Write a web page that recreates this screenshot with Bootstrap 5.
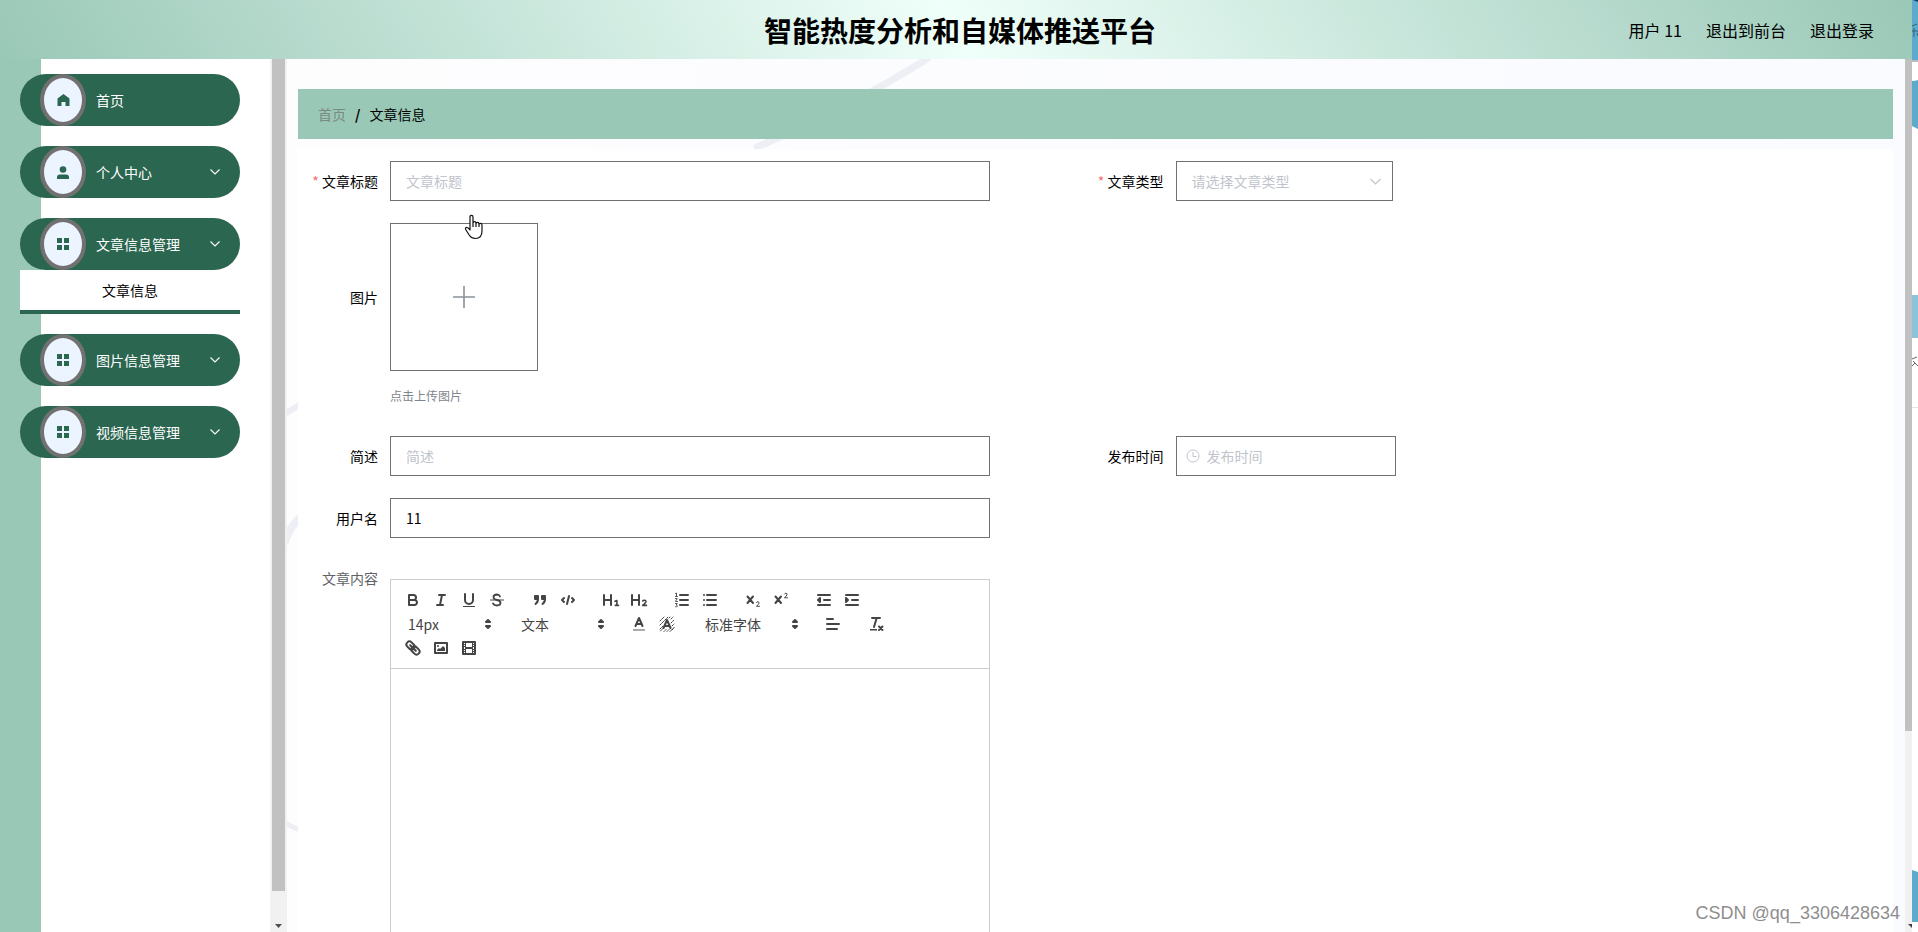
<!DOCTYPE html>
<html lang="zh-CN">
<head>
<meta charset="utf-8">
<meta name="viewport" content="width=device-width, initial-scale=1">
<title>智能热度分析和自媒体推送平台</title>
<link rel="stylesheet" href="https://cdn.jsdelivr.net/npm/bootstrap@5.3.0/dist/css/bootstrap.min.css">
<style>
  :root { --mint: #9ac8b7; --forest: #2b6650; --edge: #717171; --hint: #c0c4cc; }
  body { font-family: "Noto Sans CJK SC", sans-serif; font-size: 14px; line-height: 20px; color: #000; background: #fff; }
  a { color: inherit; text-decoration: none; }

  .topbar { display: grid; grid-template-columns: 1fr auto 1fr; height: 59px; padding: 0 38px 0 46px;
    background: linear-gradient(60deg, var(--mint), #effff9 50%, var(--mint)); }
  .topbar h1 { grid-column: 2; font-size: 28px; line-height: 40px; font-weight: 700; }
  .topbar nav { font-size: 16px; gap: 24px; }

  .side { width: 270px; padding: 15px 30px 0 20px; background: linear-gradient(90deg, var(--mint) 41px, #fff 41px); }
  .side-entry { margin-bottom: 20px; }
  .side-link { height: 52px; padding: 0 20px; border: 0; border-radius: 26px; background: var(--forest); color: #fff; }
  .side-ico { width: 46px; height: 52px; border: 4px solid #717171; border-radius: 50%; background: #ecf5ff; margin-right: 10px; }
  .side-sub { height: 44px; border-bottom: 4px solid var(--forest); background: #fff; }

  .track { background: #f1f1f1; }
  .track-side { width: 17px; padding: 0 2px; }
  .track-main { width: 7px; }
  .thumb { background: #c1c1c1; }
  .track-side .thumb { height: calc(100% - 41px); }
  .track-main .thumb { height: 77%; }

  .stage { background: linear-gradient(90deg, #fdfdfe, #fafbff); padding: 30px 12px 0 11px; }
  .crumbs { height: 50px; padding: 0 20px; margin-bottom: 10px; background: var(--mint); gap: 9px; }
  .crumbs a { color: #7c8a84; }
  .sheet { background: #fff; padding: 12px 12px 0 12px; height: 100%; }

  .field { margin-bottom: 22px; }
  .field-name { width: 80px; padding-right: 12px; text-align: right; white-space: nowrap; }
  .field-name.must::before { content: "* "; color: #f56c6c; }
  .box { height: 40px; border: 1px solid var(--edge); border-radius: 0; padding: 0 15px; font-size: 14px; color: #000; background: #fff; }
  .box::placeholder { color: var(--hint); }
  select.box { color: var(--hint); background: none; }
  .w-long { width: 600px; }
  .w-kind { width: 217px; }
  .w-date { width: 220px; }
  .w-date .box { padding-left: 30px; }
  .over-right { right: 12px; top: 13px; color: var(--hint); }
  .over-left { left: 10px; top: 13px; }
  .tall-name { line-height: 148px; }
  .editor-name { line-height: 36px; color: #606266; }
  .drop { width: 148px; height: 148px; border: 1px solid var(--edge); background: #fff; }
  .tip { font-size: 12px; line-height: 20px; margin: 15px 0 8px; color: #7e858e; }
  .hand { left: 74px; top: -9px; }

  .editor { margin-top: 19px; border: 1px solid #ccc; height: 700px; }
  .tools { padding: 8px 0 8px 8px; border-bottom: 1px solid #ccc; }
  .tools .grp { margin-right: 15px; height: 24px; }
  .tools button { width: 28px; height: 24px; padding: 3px 5px; border: 0; background: none; display: block; }
  .tools svg { width: 18px; height: 18px; display: block; }
  .tools select { width: 98px; height: 24px; border: 0; appearance: none; background: none; color: #444; padding: 0 9px; font-size: 14px; line-height: 24px; }
  .tools select.wide { width: 108px; }
  .tools .updown { right: 0; top: 3px; pointer-events: none; }
  .s { fill: none; stroke: #444; stroke-width: 2; stroke-linecap: round; stroke-linejoin: round; }
  .t { stroke-width: 1; }
  .f { fill: #444; }
  .sf { fill: #444; }

  .neighbour { width: 6px; }
  .mark-note { right: 12px; bottom: 6px; font: 18px/26px "Liberation Sans", sans-serif; color: #8e8e8e; }
</style>
</head>
<body class="vh-100 overflow-hidden d-flex">

<svg class="d-none">
  <symbol id="grid4" viewBox="0 0 12 12"><path fill="#2b6650" d="M0 0h5v5H0zM7 0h5v5H7zM0 7h5v5H0zM7 7h5v5H7z"/></symbol>
  <symbol id="down" viewBox="0 0 10 6"><path fill="none" stroke="currentColor" stroke-width="1.1" d="M.5 .5L5 5L9.500 .5"/></symbol>
  <symbol id="pick" viewBox="0 0 18 18"><path class="s sf" d="M7 11L9 13L11 11ZM7 7L9 5L11 7Z"/></symbol>
</svg>

<div class="flex-grow-1 d-flex flex-column position-relative overflow-hidden">
  <header class="topbar align-items-center flex-shrink-0">
    <h1 class="m-0">智能热度分析和自媒体推送平台</h1>
    <nav class="d-flex justify-content-end"><span>用户 11</span><a href="#">退出到前台</a><a href="#">退出登录</a></nav>
  </header>

  <div class="d-flex flex-grow-1 overflow-hidden">
    <aside class="side flex-shrink-0">
      <div class="side-entry">
        <button class="side-link w-100 d-flex align-items-center"><span class="side-ico d-flex align-items-center justify-content-center">
          <svg width="13" height="12" viewBox="0 0 13 12"><path fill="#2b6650" d="M6.500 0L12.500 4.500V12H8.500V8H4.500V12H.5V4.500Z"/></svg></span>首页</button>
      </div>
      <div class="side-entry">
        <button class="side-link w-100 d-flex align-items-center"><span class="side-ico d-flex align-items-center justify-content-center">
          <svg width="12" height="13" viewBox="0 0 12 13"><circle cx="6" cy="3.500" r="3.300" fill="#2b6650"/><path fill="#2b6650" d="M0 13V11Q0 8.500 3 8.500H9Q12 8.500 12 11V13Z"/></svg></span>个人中心<svg class="ms-auto" width="10" height="6"><use href="#down"/></svg></button>
      </div>
      <div class="side-entry">
        <button class="side-link w-100 d-flex align-items-center"><span class="side-ico d-flex align-items-center justify-content-center"><svg width="12" height="12"><use href="#grid4"/></svg></span>文章信息管理<svg class="ms-auto" width="10" height="6"><use href="#down"/></svg></button>
        <div class="side-sub d-flex align-items-center justify-content-center"><a href="#">文章信息</a></div>
      </div>
      <div class="side-entry">
        <button class="side-link w-100 d-flex align-items-center"><span class="side-ico d-flex align-items-center justify-content-center"><svg width="12" height="12"><use href="#grid4"/></svg></span>图片信息管理<svg class="ms-auto" width="10" height="6"><use href="#down"/></svg></button>
      </div>
      <div class="side-entry">
        <button class="side-link w-100 d-flex align-items-center"><span class="side-ico d-flex align-items-center justify-content-center"><svg width="12" height="12"><use href="#grid4"/></svg></span>视频信息管理<svg class="ms-auto" width="10" height="6"><use href="#down"/></svg></button>
      </div>
    </aside>

    <div class="track track-side flex-shrink-0 d-flex flex-column align-items-center justify-content-between">
      <div class="thumb w-100"></div>
      <svg class="mb-1" width="7" height="4" viewBox="0 0 7 4"><path fill="#505050" d="M0 0H7L3.500 4Z"/></svg>
    </div>

    <main class="stage flex-grow-1 position-relative overflow-hidden">
      <svg class="position-absolute top-0 start-0" width="700" height="800" viewBox="0 0 700 800" aria-hidden="true">
        <g fill="none" stroke="#eeeff4" stroke-linecap="round">
          <path stroke-width="7" d="M470 88Q560 50 640 0"/>
          <path stroke-width="6" d="M-4 356L14 345"/>
          <path stroke-width="8" d="M-2 482Q4 466 14 458"/>
          <path stroke-width="5" d="M-2 764L10 770"/>
        </g>
      </svg>
      <div class="crumbs d-flex align-items-center position-relative"><a href="#">首页</a><b>/</b><span>文章信息</span></div>
      <form class="sheet position-relative">
        <div class="row g-0">
          <div class="col-6 field d-flex align-items-center">
            <label class="field-name must" for="title">文章标题</label>
            <input id="title" class="form-control box w-long" placeholder="文章标题">
          </div>
          <div class="col-6 field d-flex align-items-center">
            <label class="field-name must" for="kind">文章类型</label>
            <div class="position-relative w-kind">
              <select id="kind" class="form-select box w-100"><option>请选择文章类型</option></select>
              <svg class="position-absolute over-right" width="11" height="14" viewBox="0 0 11 14"><path fill="none" stroke="currentColor" stroke-width="1.200" d="M.5 5L5.500 10L10.500 5"/></svg>
            </div>
          </div>
          <div class="col-12 field d-flex">
            <label class="field-name tall-name" for="pic">图片</label>
            <div class="position-relative">
              <button id="pic" type="button" class="drop d-flex align-items-center justify-content-center p-0" aria-label="点击上传图片">
                <svg width="24" height="24" viewBox="0 0 24 24"><path stroke="#8c9299" stroke-width="1.600" d="M12 1V23M1 12H23"/></svg></button>
              <p class="tip">点击上传图片</p>
              <svg class="hand position-absolute" width="20" height="26" viewBox="0 0 20 26"><path fill="#fff" stroke="#111" stroke-width="1.200" stroke-linejoin="round" d="M6 14V3Q6 1.300 7.500 1.300T9 3V9.500Q9 7.600 10.500 7.600T12 9.200V10Q12 8.300 13.500 8.300T15 10V10.800Q15 9.400 16.500 9.400T18 11V17Q18 24.500 11.500 24.500Q7.500 24.500 5.500 21.500L2 16Q.8 14 2.300 13.500Q3.800 13.200 6 16ZM9 9V13M12 10V13M15 10.500V13"/></svg>
            </div>
          </div>
          <div class="col-6 field d-flex align-items-center">
            <label class="field-name" for="brief">简述</label>
            <input id="brief" class="form-control box w-long" placeholder="简述">
          </div>
          <div class="col-6 field d-flex align-items-center">
            <label class="field-name" for="when">发布时间</label>
            <div class="position-relative w-date">
              <input id="when" class="form-control box w-100" placeholder="发布时间">
              <svg class="position-absolute over-left" width="14" height="14" viewBox="0 0 14 14"><g fill="none" stroke="#c0c4cc"><circle cx="7" cy="7" r="6"/><path d="M7 3V7.500H10.500"/></g></svg>
            </div>
          </div>
          <div class="col-12 field d-flex align-items-center">
            <label class="field-name" for="user">用户名</label>
            <input id="user" class="form-control box w-long" value="11">
          </div>
          <div class="col-12 d-flex">
            <div class="field-name editor-name">文章内容</div>
            <div class="editor w-long">
              <div class="tools d-flex flex-wrap">
                <div class="grp d-flex">
                  <button type="button" aria-label="粗体"><svg viewBox="0 0 18 18"><path class="s" d="M5 4H9.500A2.500 2.500 0 0 1 12 6.500A2.500 2.500 0 0 1 9.500 9H5ZM5 9H10.500A2.500 2.500 0 0 1 13 11.500A2.500 2.500 0 0 1 10.500 14H5Z"/></svg></button>
                  <button type="button" aria-label="斜体"><svg viewBox="0 0 18 18"><path class="s" d="M7 4H13M5 14H11M8 14L10 4"/></svg></button>
                  <button type="button" aria-label="下划线"><svg viewBox="0 0 18 18"><path class="s" d="M5 3V9A4 4 0 0 0 13 9V3"/><rect class="f" x="3" y="15" width="12" height="1"/></svg></button>
                  <button type="button" aria-label="删除线"><svg viewBox="0 0 18 18"><path class="s" stroke-width="1.200" style="stroke-width:1.2" d="M15.500 9H2.500"/><path class="s" style="stroke-width:1.8" d="M12 5.500Q11.300 3.500 9 3.500Q5.500 3.600 5.500 6.200Q5.600 8.200 9 9Q12.500 9.800 12.500 12Q12.300 14.500 9 14.500Q6 14.500 5 12.500"/></svg></button>
                </div>
                <div class="grp d-flex">
                  <button type="button" aria-label="引用"><svg viewBox="0 0 18 18"><path class="s sf" d="M4 5H7V8H4ZM11 5H14V8H11ZM7 8C7 11 6 12 4.500 13M14 8C14 11 13 12 11.500 13"/></svg></button>
                  <button type="button" aria-label="代码"><svg viewBox="0 0 18 18"><path class="s" d="M5 7L3 9L5 11M13 7L15 9L13 11M10 5L8 13"/></svg></button>
                </div>
                <div class="grp d-flex">
                  <button type="button" aria-label="标题1"><svg viewBox="0 0 18 18"><path class="s" d="M2 4V14M9 4V14M2 9H9"/><path class="s" style="stroke-width:1.6" d="M13 10.300L14.900 9.500V14.300M13.300 14.400H16.500"/></svg></button>
                  <button type="button" aria-label="标题2"><svg viewBox="0 0 18 18"><path class="s" d="M2 4V14M9 4V14M2 9H9"/><path class="s" style="stroke-width:1.600" d="M12.700 10Q13.300 9.200 14.600 9.300Q16.200 9.600 15.900 11Q15.500 12 12.700 14.400H16.500"/></svg></button>
                </div>
                <div class="grp d-flex">
                  <button type="button" aria-label="有序列表"><svg viewBox="0 0 18 18"><path class="s" d="M7 4H15M7 9H15M7 14H15"/><path class="s" d="M2.500 2.500L3.500 2V5.500M2.500 5.500H4.500M2.500 7.500H4.200L2.500 10.500H4.500M2.500 12.500H4.300L3.200 14Q4.500 14 4.300 15.200T2.500 15.700" style="stroke-width:.9"/></svg></button>
                  <button type="button" aria-label="无序列表"><svg viewBox="0 0 18 18"><path class="s" d="M6 4H15M6 9H15M6 14H15M3 4H3M3 9H3M3 14H3"/></svg></button>
                </div>
                <div class="grp d-flex">
                  <button type="button" aria-label="下标"><svg viewBox="0 0 18 18"><path class="s" d="M3.500 5.500L9 12M9 5.500L3.500 12"/><path class="s t" d="M12.500 11.500Q13 10.500 14 10.700Q15.300 11 15 12.200Q14.500 13.300 12.500 15.300H15.500"/></svg></button>
                  <button type="button" aria-label="上标"><svg viewBox="0 0 18 18"><path class="s" d="M3.500 5.500L9 12M9 5.500L3.500 12"/><path class="s t" d="M12.500 3Q13 2 14 2.200Q15.300 2.500 15 3.700Q14.500 4.800 12.500 6.800H15.500"/></svg></button>
                </div>
                <div class="grp d-flex">
                  <button type="button" aria-label="减少缩进"><svg viewBox="0 0 18 18"><path class="s" d="M3 14H15M3 4H15M9 9H15"/><path class="s sf" d="M5 7V11L3 9Z"/></svg></button>
                  <button type="button" aria-label="增加缩进"><svg viewBox="0 0 18 18"><path class="s" d="M3 14H15M3 4H15M9 9H15"/><path class="s sf" d="M3 7V11L5 9Z"/></svg></button>
                </div>
                <div class="grp position-relative"><select aria-label="字号"><option>14px</option></select><svg class="updown position-absolute"><use href="#pick"/></svg></div>
                <div class="grp position-relative"><select aria-label="段落"><option>文本</option></select><svg class="updown position-absolute"><use href="#pick"/></svg></div>
                <div class="grp d-flex">
                  <button type="button" aria-label="文字颜色"><svg viewBox="0 0 18 18"><path stroke="#aaa" stroke-width="2" d="M3 15H15"/><path class="s" d="M5.500 11L9 3L12.500 11M6.600 9H11.400"/></svg></button>
                  <button type="button" aria-label="背景颜色"><svg viewBox="0 0 18 18"><path class="s t" stroke-dasharray="1.400 1" d="M2 6L6 2M2 10L10 2M2 14L5 11M13 4L15 2M2.500 16L5.500 13M13 8L16 5M14 11L16 9M14 15L16 13M9 16.500L11 14.500M6 16.500L8 14.500M12 16.500L16 12.500M11 3L12 2"/><path class="s" d="M5.500 13L9 5L12.500 13M6.600 11H11.400"/></svg></button>
                </div>
                <div class="grp position-relative"><select class="wide" aria-label="字体"><option>标准字体</option></select><svg class="updown position-absolute"><use href="#pick"/></svg></div>
                <div class="grp d-flex"><button type="button" aria-label="对齐"><svg viewBox="0 0 18 18"><path class="s" d="M3 9H15M3 14H13M3 4H9"/></svg></button></div>
                <div class="grp d-flex"><button type="button" aria-label="清除格式"><svg viewBox="0 0 18 18"><path class="s" d="M5 3H13M9.500 3.500L7 12"/><path class="f" d="M3 14H10V15.500H3Z"/><path class="s" d="M12 11.500L15.500 15M15.500 11.500L12 15"/></svg></button></div>
                <div class="grp d-flex">
                  <button type="button" aria-label="链接"><svg viewBox="0 0 18 18"><g class="s" transform="rotate(45 9 9)"><rect x="1" y="6" width="9" height="6" rx="3"/><rect x="8" y="6" width="9" height="6" rx="3"/><path d="M5 9H13"/></g></svg></button>
                  <button type="button" aria-label="图片"><svg viewBox="0 0 18 18"><rect class="s" x="3" y="4" width="12" height="10"/><circle class="f" cx="6" cy="7" r="1"/><path class="f" d="M5 12V11L7 9L8 10L11 7L13 9V12Z"/></svg></button>
                  <button type="button" aria-label="视频"><svg viewBox="0 0 18 18"><rect class="s" x="3" y="3" width="12" height="12"/><path class="f" d="M5 3H6V15H5ZM12 3H13V15H12ZM5 8H13V10H5ZM3 5H6V6H3ZM3 7H6V8H3ZM3 10H6V11H3ZM3 12H6V13H3ZM12 5H15V6H12ZM12 7H15V8H12ZM12 10H15V11H12ZM12 12H15V13H12Z"/></svg></button>
                </div>
              </div>
            </div>
          </div>
        </div>
      </form>
    </main>

    <div class="track track-main flex-shrink-0 d-flex flex-column justify-content-between">
      <div class="thumb"></div>
      <svg class="mb-1 ms-auto" width="4" height="4" viewBox="0 0 4 4"><path fill="#404040" d="M0 0H4V4Z"/></svg>
    </div>
  </div>
  <div class="mark-note position-absolute">CSDN @qq_3306428634</div>
</div>

<svg class="neighbour flex-shrink-0" height="932" viewBox="0 0 6 932" aria-hidden="true">
  <path fill="#fff" d="M0 0H6V932H0Z"/>
  <path fill="#5cabcd" d="M0 0H6V60H0ZM0 81Q3 81 6 80V129L0 126ZM0 870L6 872V922H0Z"/>
  <path fill="#123a72" d="M1 0H6V2Z"/>
  <path fill="#b9bcc4" d="M0 60H6V62H0Z"/>
  <path fill="#8cc3da" d="M0 295H6V338H0Z"/>
  <path fill="#e3e3e3" d="M0 407H6V408H0Z"/>
  <path fill="none" stroke="#31617a" d="M0 26L5 24M0 31H6M2 28V37M5 33L6 36"/>
  <path fill="none" stroke="#666" d="M0 359L5 357M1 361L6 366M0 366L3 363"/>
</svg>

<script src="https://cdn.jsdelivr.net/npm/bootstrap@5.3.0/dist/js/bootstrap.bundle.min.js"></script>
</body>
</html>
